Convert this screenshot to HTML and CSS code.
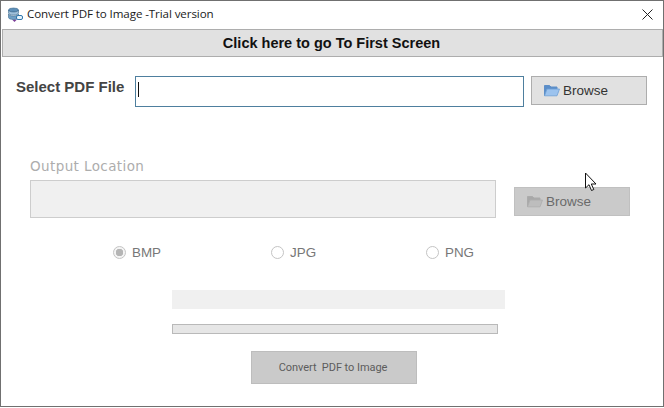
FILE: index.html
```html
<!DOCTYPE html>
<html lang="en">
<head>
<meta charset="utf-8">
<title>Convert PDF to Image</title>
<link rel="stylesheet" href="styles.css">
</head>
<body>
<div class="window">
  <header class="titlebar">
    <svg class="app-icon" width="16" height="16" viewBox="0 0 16 16">
      <path d="M5 12.500h5l-2.500 2.500z" fill="#7b3f98"/>
      <ellipse cx="6.500" cy="3" rx="5" ry="2" fill="#5d8fb8" stroke="#3d6a8e" stroke-width=".6"/>
      <path d="M1.500 3v3c0 1.100 2.200 2 5 2s5-.9 5-2V3c0 1.100-2.200 2-5 2s-5-.9-5-2z" fill="#9fc0da" stroke="#3d6a8e" stroke-width=".6"/>
      <path d="M1.500 7v3.500c0 1.100 2.200 2 5 2s5-.9 5-2V7c0 1.100-2.200 2-5 2s-5-.9-5-2z" fill="#6f9fc4" stroke="#3d6a8e" stroke-width=".6"/>
      <rect x="9.500" y="8.500" width="6" height="4" rx="1.500" fill="#e8f3fb" stroke="#2f77ad"/>
    </svg>
    <span class="title-text">Convert PDF to Image -Trial version</span>
    <svg class="close-icon" width="11" height="11" viewBox="0 0 11 11">
      <path d="M.5.500l10 10M10.500.500l-10 10" stroke="#222" stroke-width="1" fill="none"/>
    </svg>
  </header>

  <button class="first-screen">Click here to go To First Screen</button>

  <section class="select-row">
    <label class="select-label">Select PDF File</label>
    <div class="select-input"><span class="caret"></span></div>
    <button class="browse">
      <svg class="folder" width="16" height="13" viewBox="0 0 16 13">
        <path d="M.5 11.500V1.500h5l1.500 1.500h6v2H3z" fill="#5b8ec9" stroke="#5e8fc8"/>
        <path d="M.5 11.800L3 5h12.500l-2.500 6.800z" fill="#9cc3ee" stroke="#6d9fd6" stroke-width=".8"/>
      </svg>
      Browse
    </button>
  </section>

  <section class="output">
    <div class="output-label">Output Location</div>
    <div class="output-row">
      <div class="output-input"></div>
      <button class="browse disabled">
        <svg class="folder" width="16" height="13" viewBox="0 0 16 13">
          <path d="M.5 11.500V1.500h5l1.500 1.500h6v2H3z" fill="#a8a8a8" stroke="#ababab"/>
          <path d="M.5 11.800L3 5h12.500l-2.500 6.800z" fill="#bdbdbd" stroke="#adadad" stroke-width=".8"/>
        </svg>
        Browse
      </button>
    </div>
  </section>

  <section class="formats">
    <div class="format format-bmp"><span class="radio checked"></span>BMP</div>
    <div class="format format-jpg"><span class="radio"></span>JPG</div>
    <div class="format"><span class="radio"></span>PNG</div>
  </section>

  <div class="status"></div>
  <div class="progress"></div>
  <div class="convert-wrap"><button class="convert">Convert&nbsp; PDF to Image</button></div>

  <svg class="cursor" width="14" height="20" viewBox="0 0 14 20">
    <path d="M1.500 1v15l3.500-3.300 2.500 5.800 2.300-1-2.500-5.500h4.700z" fill="#fff" stroke="#111" stroke-width="1"/>
  </svg>
</div>
</body>
</html>
```
FILE: styles.css
```css
* { box-sizing: border-box; }
html, body { margin: 0; padding: 0; background: #fff; }
body { width: 664px; height: 408px; overflow: hidden; font-family: "Liberation Sans", Arial, sans-serif; }
button { font-family: inherit; padding: 0; margin: 0; }

.window {
  position: relative;
  width: 664px;
  height: 407px;
  background: #fff;
  border: 1px solid #707070;
}

.titlebar { height: 28px; display: flex; align-items: center; padding-left: 6px; padding-right: 10px; }
.app-icon { flex: none; margin-right: 4px; margin-top: -1px; }
.title-text { font-family: "Open Sans", sans-serif; font-size: 11.600px; color: #1a1a1a; letter-spacing: -.1px; margin-top: -3px; }
.close-icon { margin-left: auto; margin-top: -1px; }

.first-screen {
  display: block;
  width: 661px;
  height: 28px;
  margin-left: 1px;
  padding-right: 2px;
  background: #e1e1e1;
  border: 1px solid #adadad;
  font-size: 14.500px;
  font-weight: 700;
  color: #111;
}

.select-row { display: flex; align-items: flex-start; margin-top: 19px; padding-left: 15px; }
.select-label { width: 119px; padding-top: 3px; font-size: 15px; font-weight: 700; color: #444; line-height: 16px; white-space: nowrap; }
.select-input { width: 389px; height: 31px; border: 1px solid #4e7f9e; padding: 5px 2px; }
.caret { display: block; width: 1px; height: 15px; background: #111; }

.browse {
  display: flex;
  align-items: center;
  width: 116px;
  height: 29px;
  margin-left: 7px;
  padding-left: 12px;
  padding-bottom: 1px;
  background: #e1e1e1;
  border: 1px solid #adadad;
  font-size: 13.500px;
  color: #333;
}
.folder { flex: none; margin-right: 3px; }
.browse.disabled { margin-left: 18px; margin-top: 7px; background: #cacaca; border-color: #c0c0c0; color: #6a6a6a; }

.output { margin-top: 51px; padding-left: 29px; }
.output-label { font-family: "DejaVu Sans", sans-serif; font-size: 13.500px; line-height: 16px; letter-spacing: .4px; color: #adadad; }
.output-row { display: flex; align-items: flex-start; margin-top: 6px; }
.output-input { width: 466px; height: 38px; background: #f0f0f0; border: 1px solid #cdcdcd; }

.formats { display: flex; align-items: center; margin-top: 25px; padding-left: 112px; height: 18px; font-size: 13.400px; color: #777; }
.format { display: flex; align-items: center; }
.format-bmp { width: 158px; }
.format-jpg { width: 155px; }
.radio {
  width: 13px;
  height: 13px;
  margin-right: 6px;
  border: 1px solid #c4c4c4;
  border-radius: 50%;
  background: #fff;
}
.radio.checked { background: radial-gradient(circle, #b5b5b5 0 3.500px, #f4f4f4 4px); }

.status { width: 333px; height: 19px; margin: 29px 0 0 171px; background: #f0f0f0; }
.progress { width: 326px; height: 10px; margin: 15px 0 0 171px; background: #e6e6e6; border: 1px solid #b9b9b9; }
.convert-wrap { margin: 17px 0 0 250px; }
.convert {
  width: 166px;
  height: 33px;
  padding-right: 2px;
  background: #cacaca;
  border: 1px solid #bdbdbd;
  font-family: "Roboto", sans-serif;
  font-size: 11px;
  letter-spacing: -.05px;
  color: #5c5c5c;
}

.cursor { position: absolute; left: 583px; top: 171px; }
```
